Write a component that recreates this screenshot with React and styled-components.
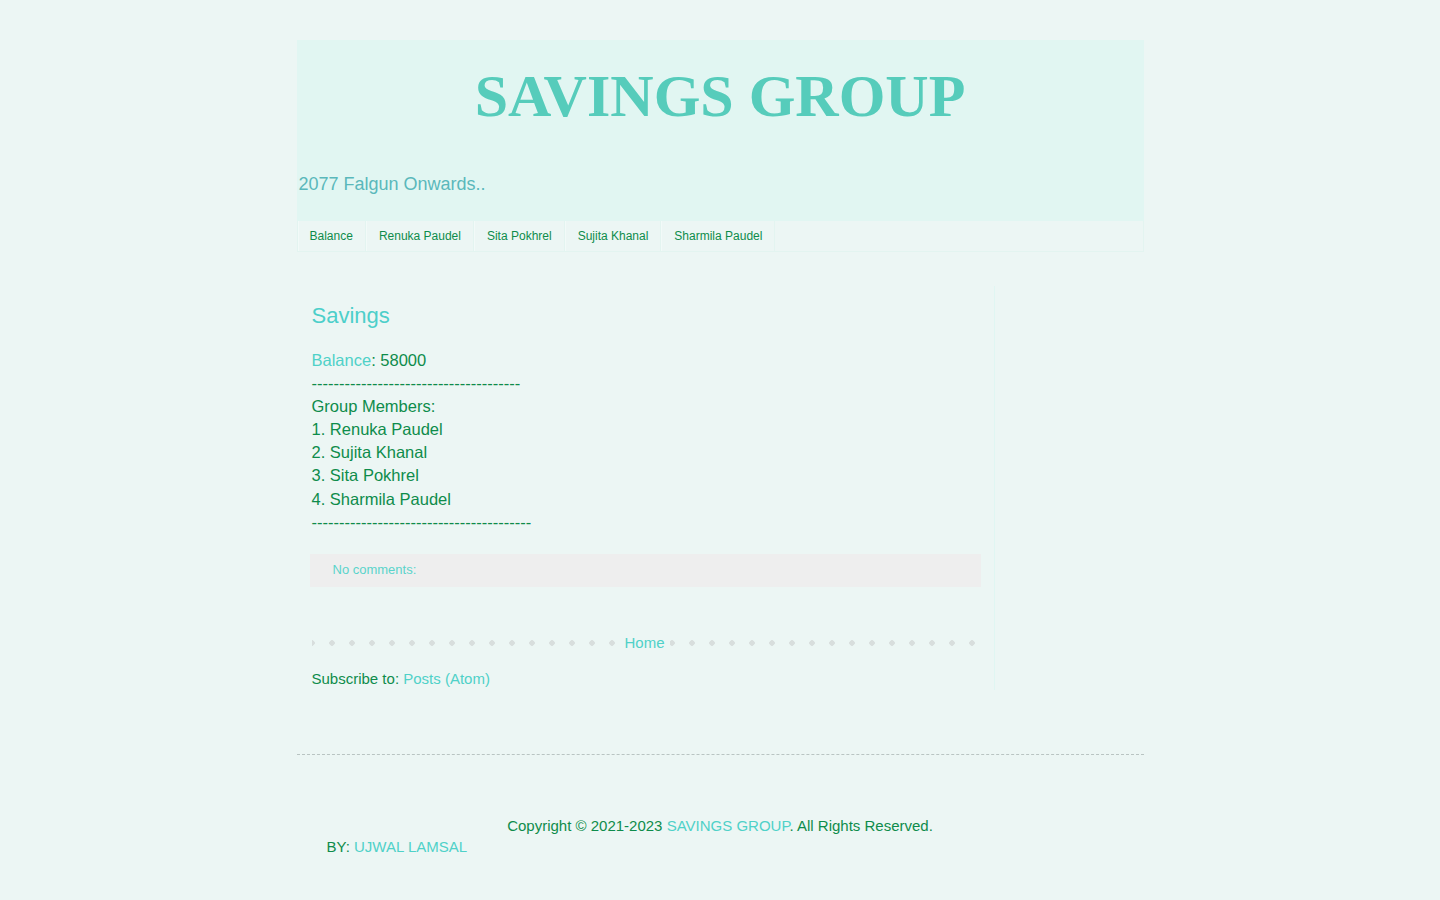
import styled, { createGlobalStyle } from "styled-components";

const GlobalStyle = createGlobalStyle`
  body {
    margin: 0;
    background: #ecf6f4;
    font-family: "Liberation Sans", Arial, sans-serif;
    color: #0e8c4b;
  }
`;

const tabs = ["Balance", "Renuka Paudel", "Sita Pokhrel", "Sujita Khanal", "Sharmila Paudel"];
const members = ["Renuka Paudel", "Sujita Khanal", "Sita Pokhrel", "Sharmila Paudel"];

//--------------- Header ---------------
const Outer = styled.div`
  width: 847px;
  margin: 40px auto 0;
  padding-bottom: 64px;
`;

const Header = styled.header`
  background: #e1f6f2;
  padding: 20px 0 26px;
`;

const Title = styled.h1`
  margin: 0;
  text-align: center;
  font-family: "Liberation Serif", "Times New Roman", serif;
  font-weight: bold;
  font-size: 60px;
  line-height: 72px;
  color: #56ccbb;
`;

const Description = styled.p`
  margin: 42px 0 0 2px;
  font-size: 18px;
  line-height: 21px;
  color: #5ab8bb;
`;

const TabBar = styled.ul`
  list-style: none;
  margin: 0;
  padding: 0;
  display: flex;
  height: 31px;
  background: #ecf6f4;
  border: 1px solid #e3f4f0;
  border-top: none;
  box-sizing: border-box;
`;

const Tab = styled.li`
  padding: 0 12px;
  border-right: 1px solid #e3f4f0;
  border-left: 1px solid #f2faf8;
  font-size: 12px;
  line-height: 30px;
  color: #0e8c4b;

  &:first-child {
    padding-left: 11px;
  }
`;

//--------------- Main ---------------
const Columns = styled.div`
  display: flex;
  margin-top: 34px;
`;

const Main = styled.main`
  width: 682px;
  padding: 5px 0 0 15px;
`;

const Sidebar = styled.aside`
  flex: 1;
  border-left: 1px solid #e0f6f2;
`;

const PostTitle = styled.h2`
  margin: 12px 0 0;
  font-weight: normal;
  font-size: 22px;
  line-height: 26px;
  color: #4ccfca;
`;

const PostBody = styled.div`
  margin-top: 20px;
  font-size: 16.5px;
  line-height: 1.4;
`;

const Link = styled.span`
  color: #4fd1c8;
`;

const Comments = styled.div`
  margin: 20px 0 0 -2px;
  width: 671px;
  height: 33px;
  background: #eeeeee;
  padding-left: 23px;
  box-sizing: border-box;
  font-size: 13px;
  line-height: 31px;
  color: #5ad4cb;
`;

const Pager = styled.div`
  margin-top: 46px;
  width: 666px;
  height: 20px;
  display: flex;
  justify-content: center;
  align-items: center;
  background-image: radial-gradient(circle, #d8dedd 2.5px, transparent 3px);
  background-size: 20px 20px;
  background-position: -10px 0;
  background-repeat: repeat-x;
`;

const PagerLink = styled.span`
  background: #ecf6f4;
  padding: 0 5px;
  font-size: 15px;
  line-height: 20px;
  color: #4fd1c8;
`;

const Subscribe = styled.div`
  margin-top: 16px;
  font-size: 15px;
  line-height: 20px;
  padding-bottom: 1px;
`;

//--------------- Footer ---------------
const Footer = styled.footer`
  width: 847px;
  margin: 0 auto;
  border-top: 1px dashed #b9c4c2;
  padding: 60px 0 40px;
  font-size: 15px;
  line-height: 21px;
`;

const Copyright = styled.div`
  text-align: center;
`;

const Byline = styled.div`
  padding-left: 30px;
`;

const App = () => {
  return (
    <>
      <GlobalStyle />
      <Outer>
        <Header>
          <Title>SAVINGS GROUP</Title>
          <Description>2077 Falgun Onwards..</Description>
        </Header>
        <TabBar>
          {tabs.map((t) => (
            <Tab key={t}>{t}</Tab>
          ))}
        </TabBar>
        <Columns>
          <Main>
            <PostTitle>Savings</PostTitle>
            <PostBody>
              <div>
                <Link>Balance</Link>: 58000
              </div>
              <div>--------------------------------------</div>
              <div>Group Members:</div>
              {members.map((m, i) => (
                <div key={m}>
                  {i + 1}. {m}
                </div>
              ))}
              <div>----------------------------------------</div>
            </PostBody>
            <Comments>No comments:</Comments>
            <Pager>
              <PagerLink>Home</PagerLink>
            </Pager>
            <Subscribe>
              Subscribe to: <Link>Posts (Atom)</Link>
            </Subscribe>
          </Main>
          <Sidebar />
        </Columns>
      </Outer>
      <Footer>
        <Copyright>
          Copyright © 2021-2023 <Link>SAVINGS GROUP</Link>. All Rights Reserved.
        </Copyright>
        <Byline>
          BY: <Link>UJWAL LAMSAL</Link>
        </Byline>
      </Footer>
    </>
  );
};

export default App;
